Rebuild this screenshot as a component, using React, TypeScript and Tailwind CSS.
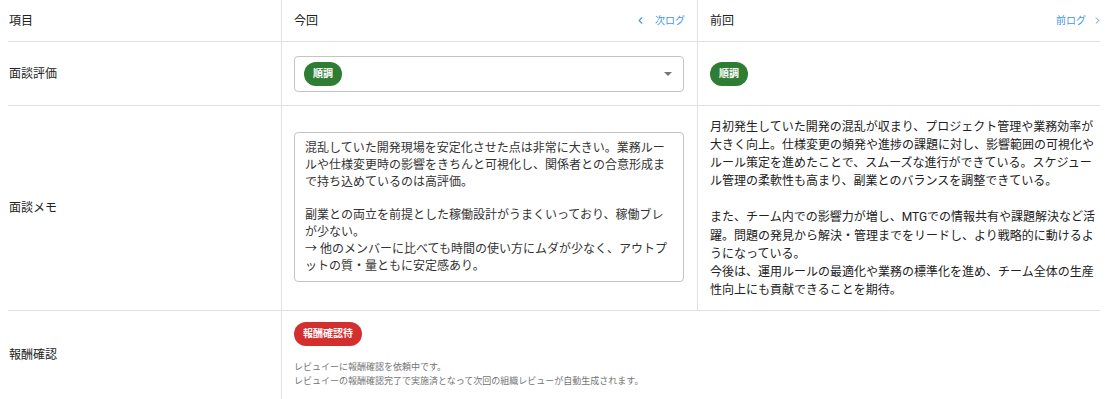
import { ChevronLeft, ChevronRight } from "lucide-react";

const memoLines = [
  "混乱していた開発現場を安定化させた点は非常に大きい。業務ルー",
  "ルや仕様変更時の影響をきちんと可視化し、関係者との合意形成ま",
  "で持ち込めているのは高評価。",
  "",
  "副業との両立を前提とした稼働設計がうまくいっており、稼働ブレ",
  "が少ない。",
  "→ 他のメンバーに比べても時間の使い方にムダが少なく、アウトプ",
  "ットの質・量ともに安定感あり。",
];

const prevMemoLines = [
  "月初発生していた開発の混乱が収まり、プロジェクト管理や業務効率が",
  "大きく向上。仕様変更の頻発や進捗の課題に対し、影響範囲の可視化や",
  "ルール策定を進めたことで、スムーズな進行ができている。スケジュー",
  "ル管理の柔軟性も高まり、副業とのバランスを調整できている。",
  "",
  "また、チーム内での影響力が増し、MTGでの情報共有や課題解決など活",
  "躍。問題の発見から解決・管理までをリードし、より戦略的に動けるよ",
  "うになっている。",
  "今後は、運用ルールの最適化や業務の標準化を進め、チーム全体の生産",
  "性向上にも貢献できることを期待。",
];

// small pill label
const Badge = ({ label, color }: { label: string; color: string }) => (
  <span
    className={`inline-flex items-center h-6 px-[9px] rounded-full text-white text-[10px] font-bold leading-none ${color}`}
  >
    {label}
  </span>
);

const App = () => {
  return (
    <main className="w-[1105px] h-[399px] overflow-hidden bg-white pl-2 text-[12px] text-[#212121] font-[Roboto,'Noto_Sans_CJK_JP',sans-serif]">
      <div className="w-[1092px]">
        {/* header */}
        <div className="grid grid-cols-[274px_416px_402px] h-[42px] border-b border-[#e0e0e0]">
          <div className="flex items-center pl-[1px] border-r border-[#e0e0e0]">項目</div>
          <div className="flex items-center justify-between px-3 border-r border-[#e0e0e0]">
            <span>今回</span>
            <button className="flex items-center text-[10px] text-[#3f97ee]">
              <ChevronLeft size={11} strokeWidth={2.5} className="mr-[9px]" />
              次ログ
            </button>
          </div>
          <div className="flex items-center justify-between pl-3 pr-0">
            <span>前回</span>
            <button className="flex items-center text-[10px] text-[#3f97ee] -mr-[3px]">
              前ログ
              <ChevronRight size={11} strokeWidth={2} className="ml-[6px]" />
            </button>
          </div>
        </div>

        {/* 面談評価 */}
        <div className="grid grid-cols-[274px_416px_402px] h-[64px] border-b border-[#e0e0e0]">
          <div className="flex items-center pl-[1px] border-r border-[#e0e0e0]">面談評価</div>
          <div className="flex items-center px-3 border-r border-[#e0e0e0]">
            <div className="w-[390px] h-9 flex items-center justify-between pl-[9px] pr-[11px] border border-[#c4c4c4] rounded">
              <Badge label="順調" color="bg-[#2e7d32]" />
              <svg width="8" height="4" viewBox="0 0 8 4">
                <polygon points="0,0 8,0 4,4" fill="#757575" />
              </svg>
            </div>
          </div>
          <div className="flex items-center px-3">
            <Badge label="順調" color="bg-[#2e7d32]" />
          </div>
        </div>

        {/* 面談メモ */}
        <div className="grid grid-cols-[274px_416px_402px] border-b border-[#e0e0e0]">
          <div className="flex items-center pl-[1px] border-r border-[#e0e0e0]">面談メモ</div>
          <div className="flex items-center px-3 border-r border-[#e0e0e0]">
            <div className="w-[390px] h-[150px] -mt-[2px] border border-[#c4c4c4] rounded px-[10px] py-[7px] leading-[16.8px] text-[#333]">
              {memoLines.map((line, i) => (
                <div key={i} className="whitespace-nowrap h-[16.8px]">
                  {line}
                </div>
              ))}
            </div>
          </div>
          <div className="px-3 pt-3 pb-[11px] leading-[18.1px]">
            {prevMemoLines.map((line, i) => (
              <div key={i} className="whitespace-nowrap h-[18.1px]">
                {line}
              </div>
            ))}
          </div>
        </div>

        {/* 報酬確認 */}
        <div className="grid grid-cols-[274px_818px]">
          <div className="flex items-center pl-[1px] border-r border-[#e0e0e0]">報酬確認</div>
          <div className="px-3 pt-[11px] pb-3">
            <Badge label="報酬確認待" color="bg-[#d32f2f]" />
            <div className="mt-[14px] text-[9px] leading-[14px] text-[#757575]">
              <p>レビュイーに報酬確認を依頼中です。</p>
              <p>レビュイーの報酬確認完了で実施済となって次回の組織レビューが自動生成されます。</p>
            </div>
          </div>
        </div>
      </div>
    </main>
  );
};

export default App;
